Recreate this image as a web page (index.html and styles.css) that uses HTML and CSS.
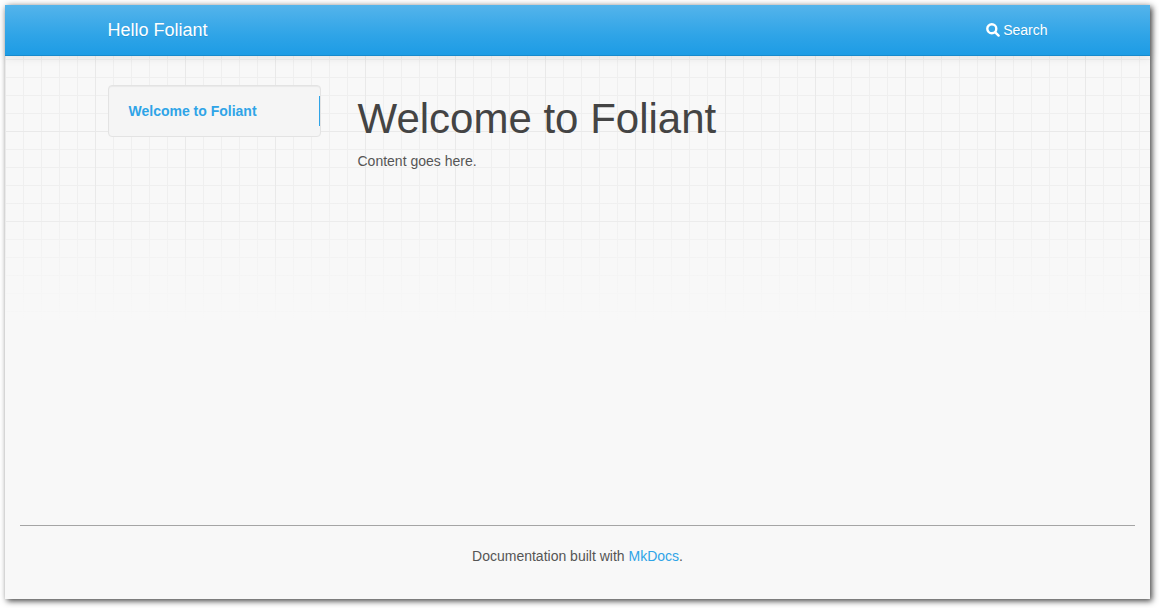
FILE: index.html
```html
<!DOCTYPE html>
<html lang="en">
<head>
<meta charset="utf-8">
<title>Hello Foliant</title>
<link rel="stylesheet" href="styles.css">
</head>
<body>
<div class="page">
  <header class="navbar">
    <nav class="container navbar-inner">
      <a class="brand" href="#">Hello Foliant</a>
      <a class="search" href="#"><svg class="search-icon" viewBox="0 0 14 14" aria-hidden="true"><circle cx="5.800" cy="5.800" r="4.500"/><path d="M9.300 9.300l3.300 3.300"/></svg>Search</a>
    </nav>
  </header>
  <div class="container layout">
    <aside class="sidebar">
      <a class="sidebar-link" href="#welcome">Welcome to Foliant</a>
    </aside>
    <main class="content">
      <h1 class="title" id="welcome">Welcome to Foliant</h1>
      <p class="text">Content goes here.</p>
    </main>
  </div>
  <footer class="footer">
    <p class="text">Documentation built with <a class="link" href="#">MkDocs</a>.</p>
  </footer>
</div>
</body>
</html>
```
FILE: styles.css
```css
* {
  box-sizing: border-box;
}

body {
  display: flex;
  min-height: 100vh;
  margin: 0;
  padding: 5px 9px 9px 5px;
  background: #fff;
  color: #555;
  font: 14px/20px "Liberation Sans", Arial, sans-serif;
}

.page {
  display: flex;
  flex: 1;
  flex-direction: column;
  background:
    linear-gradient(rgba(248, 248, 248, 0) 190px, #f8f8f8 320px),
    linear-gradient(90deg, #e9e9e9 1px, transparent 1px) 0 0 / 90px 90px,
    linear-gradient(#e9e9e9 1px, transparent 1px) 0 36px / 90px 90px,
    linear-gradient(90deg, #efefef 1px, transparent 1px) 0 0 / 18px 18px,
    linear-gradient(#efefef 1px, transparent 1px) 0 0 / 18px 18px,
    #f8f8f8;
  box-shadow: 2px 2px 6px rgba(0, 0, 0, 0.75);
}

.container {
  width: 100%;
  max-width: 970px;
  margin: 0 auto;
  padding: 0 15px;
}

.navbar {
  border-bottom: 1px solid #178acc;
  background: linear-gradient(#54b4eb, #2fa4e7 60%, #1d9ce5);
  box-shadow: 0 1px 10px rgba(0, 0, 0, 0.1);
}

.navbar-inner {
  display: flex;
  align-items: center;
  justify-content: space-between;
  height: 50px;
}

.brand,
.search {
  color: #fff;
  text-decoration: none;
  text-shadow: 0 1px 0 rgba(0, 0, 0, 0.1);
}

.brand {
  font-size: 18px;
}

.search {
  display: flex;
  align-items: center;
  gap: 3px;
}

.search-icon {
  width: 14px;
  height: 14px;
  fill: none;
  stroke: #fff;
  stroke-width: 2.4;
  stroke-linecap: round;
}

.layout {
  display: grid;
  flex: 1;
  grid-template-columns: 213px 1fr;
  align-items: start;
  gap: 37px;
  padding-top: 29px;
}

.sidebar {
  padding: 10px 0;
  border: 1px solid #e3e3e3;
  border-radius: 4px;
  background: #f5f5f5;
  box-shadow: inset 0 1px 1px rgba(0, 0, 0, 0.05);
}

.sidebar-link {
  display: block;
  padding: 5px 20px;
  border-right: 1px solid #2fa4e7;
  color: #2fa4e7;
  font-weight: 700;
  text-decoration: none;
}

.content {
  padding-top: 10px;
}

.title {
  margin: 0 0 8px;
  color: #444;
  font-size: 42px;
  font-weight: 400;
  line-height: 48px;
}

.text {
  margin: 0;
}

.footer {
  margin: 0 15px;
  padding: 20px 0 33px;
  border-top: 1px solid #a5a5a5;
  text-align: center;
}

.link {
  color: #2fa4e7;
  text-decoration: none;
}
```
